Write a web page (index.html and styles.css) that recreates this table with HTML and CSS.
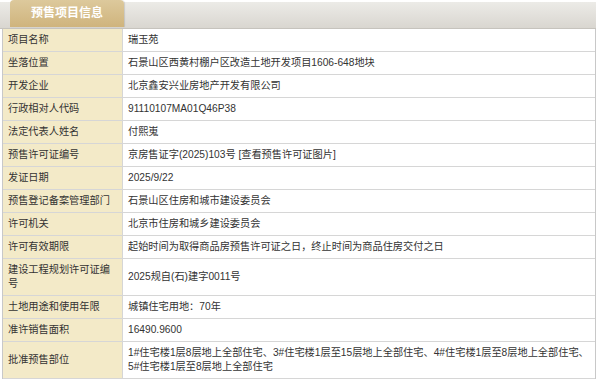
FILE: index.html
```html
<!DOCTYPE html>
<html lang="zh-CN">
<head>
<meta charset="utf-8">
<title>预售项目信息</title>
<link rel="stylesheet" href="styles.css">
</head>
<body>
<div class="panel">
  <div class="head">
    <div class="tab">预售项目信息</div>
  </div>
  <table class="info">
    <tr><th>项目名称</th><td>瑞玉苑</td></tr>
    <tr><th>坐落位置</th><td>石景山区西黄村棚户区改造土地开发项目1606-648地块</td></tr>
    <tr><th>开发企业</th><td>北京鑫安兴业房地产开发有限公司</td></tr>
    <tr><th>行政相对人代码</th><td>91110107MA01Q46P38</td></tr>
    <tr><th>法定代表人姓名</th><td>付熙嵬</td></tr>
    <tr><th>预售许可证编号</th><td>京房售证字(2025)103号 [查看预售许可证图片]</td></tr>
    <tr><th>发证日期</th><td>2025/9/22</td></tr>
    <tr><th>预售登记备案管理部门</th><td>石景山区住房和城市建设委员会</td></tr>
    <tr><th>许可机关</th><td>北京市住房和城乡建设委员会</td></tr>
    <tr><th>许可有效期限</th><td>起始时间为取得商品房预售许可证之日，终止时间为商品住房交付之日</td></tr>
    <tr><th>建设工程规划许可证编号</th><td>2025规自(石)建字0011号</td></tr>
    <tr><th>土地用途和使用年限</th><td>城镇住宅用地：70年</td></tr>
    <tr><th>准许销售面积</th><td>16490.9600</td></tr>
    <tr><th>批准预售部位</th><td>1#住宅楼1层8层地上全部住宅、3#住宅楼1层至15层地上全部住宅、4#住宅楼1层至8层地上全部住宅、5#住宅楼1层至8层地上全部住宅</td></tr>
  </table>
</div>
</body>
</html>
```

FILE: styles.css
```css
html, body {
  margin: 0;
  padding: 0;
  background: #ffffff;
}

body {
  font-family: "Liberation Sans", "Noto Sans CJK SC", sans-serif;
  color: #333333;
}

.panel {
  width: 596px;
}

.head {
  height: 28px;
  padding-left: 10px;
  background: linear-gradient(to bottom, #ffffff 0, #ffffff 2px, #ecebe7 2px, #d9d6d0 28px);
  border-bottom: 1px solid #c6c3bd;
  display: flex;
  align-items: flex-start;
}

.tab {
  width: 114px;
  height: 27px;
  border-radius: 4px 4px 0 0;
  background: linear-gradient(to bottom, #ddc99c, #cfb47d);
  box-shadow: 1px 0 1px rgba(0, 0, 0, 0.12);
  color: #ffffff;
  font-size: 12px;
  font-weight: bold;
  line-height: 27px;
  text-align: center;
}

.info {
  margin-left: 2px;
  width: 594px;
  border-collapse: separate;
  border-spacing: 0;
  border-left: 1px solid #c8c8c8;
  border-right: 1px solid #c8c8c8;
  font-size: 10.2px;
  line-height: 14px;
}

.info th,
.info td {
  padding: 4px 5px;
  border-bottom: 1px solid #d6d6d6;
  vertical-align: middle;
  text-align: left;
  font-weight: normal;
}

.info th {
  width: 109px;
  background: #f3eac8;
  border-right: 1px solid #d6d6d6;
}

.info td {
  background: #ffffff;
}
```
